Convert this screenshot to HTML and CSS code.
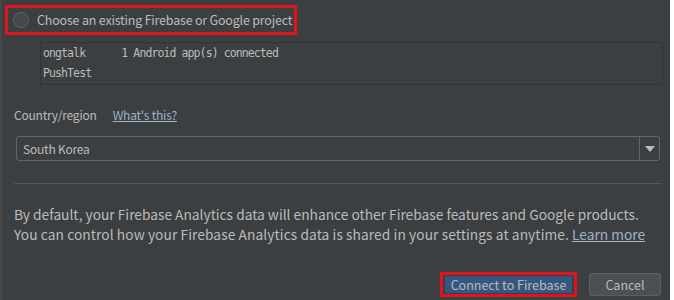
FILE: index.html
```html
<!DOCTYPE html>
<html>
<head>
	<meta charset="utf-8">
	<title>Connect to Firebase</title>
	<link rel="stylesheet" href="styles.css">
</head>
<body>
	<div class="dialog">
		<div class="choice">
			<span class="radio"></span>
			<span>Choose an existing Firebase or Google project</span>
		</div>
		<div class="projects">
			<div class="project">ongtalk      1 Android app(s) connected</div>
			<div class="project">PushTest</div>
		</div>
		<div class="country">
			<span>Country/region</span>
			<a href="#" class="link">What's this?</a>
		</div>
		<div class="combo">
			<span class="combo-value">South Korea</span>
			<span class="combo-arrow"></span>
		</div>
		<div class="separator"></div>
		<p class="info">
			By default, your Firebase Analytics data will enhance other Firebase features and Google products.<br>
			<span class="info-second">You can control how your Firebase Analytics data is shared in your settings at anytime.</span> <a href="#" class="link">Learn more</a>
		</p>
		<div class="buttons">
			<div class="highlight">
				<button class="btn btn-primary">Connect to Firebase</button>
			</div>
			<button class="btn">Cancel</button>
		</div>
	</div>
</body>
</html>
```

FILE: styles.css
```css
body {
	margin: 0;
	background-color: #ffffff;
}

.dialog {
	width: 670px;
	height: 300px;
	overflow: hidden;
	background-color: #3c3f41;
	border-left: 2px solid #45484a;
	box-sizing: border-box;
	font-family: "Noto Sans CJK KR", "Liberation Sans", sans-serif;
	font-size: 12px;
	letter-spacing: -0.2px;
	color: #bbbbbb;
	padding-top: 5px;
}

.choice {
	margin-left: 3px;
	width: 292px;
	height: 30px;
	box-sizing: border-box;
	border: 3px solid #e3131b;
	display: flex;
	align-items: center;
	gap: 8px;
	padding-left: 5px;
	line-height: 20px;
	white-space: nowrap;
	font-size: 12.5px;
}

.radio {
	width: 14px;
	height: 14px;
	border: 1px solid #5f6264;
	border-radius: 50%;
	background-color: #43484a;
}

.projects {
	margin: 7px 0 0 38px;
	width: 623px;
	height: 43px;
	box-sizing: border-box;
	border: 1px solid #313335;
	padding: 0 2px;
	font-family: "DejaVu Sans Mono", monospace;
	font-size: 11.5px;
	letter-spacing: -0.9px;
}

.project {
	height: 20px;
	line-height: 20px;
	white-space: pre;
}

.country {
	margin: 19px 0 0 12px;
	height: 20px;
	display: flex;
	align-items: center;
	gap: 16px;
}

.link {
	color: #9fb2c6;
	text-decoration: underline;
}

.combo {
	margin: 12px 0 0 14px;
	width: 644px;
	height: 25px;
	box-sizing: border-box;
	border: 1px solid #646464;
	border-radius: 3px;
	display: flex;
	align-items: center;
}

.combo-value {
	flex: 1;
	padding-left: 6px;
	line-height: 20px;
}

.combo-arrow {
	width: 19px;
	height: 100%;
	border-left: 1px solid #646464;
	display: flex;
	align-items: center;
	justify-content: center;
}

.combo-arrow::after {
	content: "";
	border-left: 5px solid transparent;
	border-right: 5px solid transparent;
	border-top: 6px solid #bbbbbb;
}

.separator {
	margin: 22px 8px 0 12px;
	height: 1px;
	background-color: #515658;
}

.info {
	margin: 20px 0 0 12px;
	font-size: 13.75px;
	letter-spacing: 0;
	line-height: 20px;
	white-space: nowrap;
}

.info-second {
	letter-spacing: 0.08px;
}

.buttons {
	margin-top: 28px;
	display: flex;
	align-items: center;
	justify-content: flex-end;
	gap: 12px;
	padding-right: 9px;
}

.highlight {
	border: 3px solid #e3131b;
	padding: 1px 2px;
}

.btn {
	font-family: "Noto Sans CJK KR", "Liberation Sans", sans-serif;
	font-size: 12.5px;
	line-height: 17px;
	color: #bbbbbb;
	background-color: #4c5052;
	border: 1px solid #5e6060;
	border-radius: 3px;
	height: 23px;
	width: 72px;
	padding: 0;
}

.btn-primary {
	background-color: #365880;
	border: none;
	border-radius: 0;
	height: 17px;
	width: 127px;
}
```
